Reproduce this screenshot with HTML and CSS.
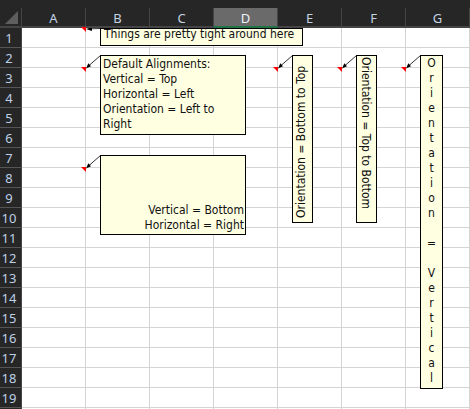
FILE: index.html
```html
<!DOCTYPE html>
<html>
<head>
<meta charset="utf-8">
<link rel="stylesheet" href="styles.css">
</head>
<body>
<div class="sheet">
  <div class="topbar"></div>
  <div class="row head">
    <div class="corner"><span class="tri"></span></div>
    <div class="ch">A</div><div class="ch">B</div><div class="ch">C</div><div class="ch sel">D</div><div class="ch">E</div><div class="ch">F</div><div class="ch">G</div>
  </div>
  <div class="row"><div class="rh">1</div><div class="cell note-mark"></div><div class="cell"></div><div class="cell"></div><div class="cell"></div><div class="cell"></div><div class="cell"></div><div class="cell"></div></div>
  <div class="row"><div class="rh">2</div><div class="cell"></div><div class="cell"></div><div class="cell"></div><div class="cell"></div><div class="cell"></div><div class="cell"></div><div class="cell"></div></div>
  <div class="row"><div class="rh">3</div><div class="cell note-mark"></div><div class="cell"></div><div class="cell"></div><div class="cell note-mark"></div><div class="cell note-mark"></div><div class="cell note-mark"></div><div class="cell"></div></div>
  <div class="row"><div class="rh">4</div><div class="cell"></div><div class="cell"></div><div class="cell"></div><div class="cell"></div><div class="cell"></div><div class="cell"></div><div class="cell"></div></div>
  <div class="row"><div class="rh">5</div><div class="cell"></div><div class="cell"></div><div class="cell"></div><div class="cell"></div><div class="cell"></div><div class="cell"></div><div class="cell"></div></div>
  <div class="row"><div class="rh">6</div><div class="cell"></div><div class="cell"></div><div class="cell"></div><div class="cell"></div><div class="cell"></div><div class="cell"></div><div class="cell"></div></div>
  <div class="row"><div class="rh">7</div><div class="cell"></div><div class="cell"></div><div class="cell"></div><div class="cell"></div><div class="cell"></div><div class="cell"></div><div class="cell"></div></div>
  <div class="row"><div class="rh">8</div><div class="cell note-mark"></div><div class="cell"></div><div class="cell"></div><div class="cell"></div><div class="cell"></div><div class="cell"></div><div class="cell"></div></div>
  <div class="row"><div class="rh">9</div><div class="cell"></div><div class="cell"></div><div class="cell"></div><div class="cell"></div><div class="cell"></div><div class="cell"></div><div class="cell"></div></div>
  <div class="row"><div class="rh">10</div><div class="cell"></div><div class="cell"></div><div class="cell"></div><div class="cell"></div><div class="cell"></div><div class="cell"></div><div class="cell"></div></div>
  <div class="row"><div class="rh">11</div><div class="cell"></div><div class="cell"></div><div class="cell"></div><div class="cell"></div><div class="cell"></div><div class="cell"></div><div class="cell"></div></div>
  <div class="row"><div class="rh">12</div><div class="cell"></div><div class="cell"></div><div class="cell"></div><div class="cell"></div><div class="cell"></div><div class="cell"></div><div class="cell"></div></div>
  <div class="row"><div class="rh">13</div><div class="cell"></div><div class="cell"></div><div class="cell"></div><div class="cell"></div><div class="cell"></div><div class="cell"></div><div class="cell"></div></div>
  <div class="row"><div class="rh">14</div><div class="cell"></div><div class="cell"></div><div class="cell"></div><div class="cell"></div><div class="cell"></div><div class="cell"></div><div class="cell"></div></div>
  <div class="row"><div class="rh">15</div><div class="cell"></div><div class="cell"></div><div class="cell"></div><div class="cell"></div><div class="cell"></div><div class="cell"></div><div class="cell"></div></div>
  <div class="row"><div class="rh">16</div><div class="cell"></div><div class="cell"></div><div class="cell"></div><div class="cell"></div><div class="cell"></div><div class="cell"></div><div class="cell"></div></div>
  <div class="row"><div class="rh">17</div><div class="cell"></div><div class="cell"></div><div class="cell"></div><div class="cell"></div><div class="cell"></div><div class="cell"></div><div class="cell"></div></div>
  <div class="row"><div class="rh">18</div><div class="cell"></div><div class="cell"></div><div class="cell"></div><div class="cell"></div><div class="cell"></div><div class="cell"></div><div class="cell"></div></div>
  <div class="row"><div class="rh">19</div><div class="cell"></div><div class="cell"></div><div class="cell"></div><div class="cell"></div><div class="cell"></div><div class="cell"></div><div class="cell"></div></div>
  <div class="row"><div class="rh"></div><div class="cell"></div><div class="cell"></div><div class="cell"></div><div class="cell"></div><div class="cell"></div><div class="cell"></div><div class="cell"></div></div>

  <div class="layer">
    <svg class="arrows" width="470" height="381" viewBox="0 28 470 381">
      <g stroke="#333" stroke-width="1" fill="none">
        <line x1="100.5" y1="28.5" x2="89" y2="28.8"/>
        <line x1="100.5" y1="55.5" x2="89" y2="65.5"/>
        <line x1="100.5" y1="155.5" x2="89" y2="165.5"/>
        <line x1="292.5" y1="55.5" x2="281" y2="65.5"/>
        <line x1="356.5" y1="55.5" x2="345" y2="65.5"/>
        <line x1="420.5" y1="55.5" x2="409" y2="65.5"/>
      </g>
      <g fill="#000">
        <polygon points="86,29 92,27 92,31"/>
        <polygon points="86,68.5 91,66.3 88.3,63.3"/>
        <polygon points="86,168.5 91,166.3 88.3,163.3"/>
        <polygon points="278,68.5 283,66.3 280.3,63.3"/>
        <polygon points="342,68.5 347,66.3 344.3,63.3"/>
        <polygon points="406,68.5 411,66.3 408.3,63.3"/>
      </g>
    </svg>
    <div class="note n1"><div class="txt">Things are pretty tight around here</div></div>
    <div class="note n2">Default Alignments:<br>Vertical = Top<br>Horizontal = Left<br>Orientation = Left to<br>Right</div>
    <div class="note n3"><div class="txt">Vertical = Bottom<br>Horizontal = Right</div></div>
    <div class="note rot up">Orientation = Bottom to Top</div>
    <div class="note rot down">Orientation = Top to Bottom</div>
    <div class="note stack"><span>O</span><span>r</span><span>i</span><span>e</span><span>n</span><span>t</span><span>a</span><span>t</span><span>i</span><span>o</span><span>n</span><span></span><span>=</span><span></span><span>V</span><span>e</span><span>r</span><span>t</span><span>i</span><span>c</span><span>a</span><span>l</span></div>
  </div>
</div>
</body>
</html>
```
FILE: styles.css
```css
* { box-sizing: border-box; }
html, body { margin: 0; padding: 0; }
body {
  width: 470px;
  height: 409px;
  overflow: hidden;
  background: #ffffff;
  font-family: "Noto Sans", "DejaVu Sans", sans-serif;
}
.sheet {
  position: relative;
  width: 470px;
  height: 409px;
  overflow: hidden;
}
.topbar {
  height: 8px;
  background: #262626;
}
.row {
  display: flex;
  height: 20px;
}
.head {
  background: #262626;
}
.corner {
  position: relative;
  width: 22px;
  height: 20px;
  border-right: 1px solid #454545;
  border-bottom: 2px solid #454545;
  background: #262626;
}
.tri {
  position: absolute;
  right: 3px;
  bottom: 2px;
  width: 0;
  height: 0;
  border-left: 13px solid transparent;
  border-bottom: 13px solid #5e5e5e;
}
.ch {
  width: 64px;
  height: 20px;
  border-right: 1px solid #454545;
  border-bottom: 2px solid #454545;
  background: #262626;
  color: #c4d3e3;
  font-size: 13px;
  display: flex;
  align-items: center;
  justify-content: center;
  padding-top: 1px;
}
.ch.sel {
  background: #6a6a6a;
  border-bottom-color: #217346;
  color: #eef3f8;
}
.rh {
  width: 22px;
  height: 20px;
  border-right: 1px solid #454545;
  border-bottom: 1px solid #555555;
  background: #262626;
  color: #bdd0e6;
  font-size: 13px;
  display: flex;
  align-items: center;
  justify-content: center;
  padding-right: 3px;
  padding-top: 1px;
}
.cell {
  position: relative;
  width: 64px;
  height: 20px;
  border-right: 1px solid #d4d4d4;
  border-bottom: 1px solid #d4d4d4;
  background: #ffffff;
}
.note-mark::after {
  content: "";
  position: absolute;
  top: -1px;
  right: -1px;
  width: 0;
  height: 0;
  border-top: 5px solid #ff0000;
  border-left: 5px solid transparent;
}
.layer {
  position: absolute;
  left: 0;
  top: 28px;
  width: 470px;
  height: 381px;
  overflow: hidden;
  pointer-events: none;
}
.arrows {
  position: absolute;
  left: 0;
  top: 0;
}
.note {
  position: absolute;
  background: #ffffe1;
  border: 1px solid #000000;
  color: #111111;
  font-family: "DejaVu Sans Condensed", "DejaVu Sans", sans-serif;
  font-size: 12px;
  line-height: 15px;
  white-space: nowrap;
}
.n1 {
  left: 100px;
  top: 0;
  width: 203px;
  height: 18px;
  padding-left: 3px;
}
.n1 .txt {
  margin-top: -2px;
}
.n2 {
  left: 100px;
  top: 27px;
  width: 146px;
  height: 80px;
  padding: 1px 2px;
}
.n3 {
  left: 100px;
  top: 127px;
  width: 146px;
  height: 80px;
  display: flex;
  flex-direction: column;
  justify-content: flex-end;
  align-items: flex-end;
  text-align: right;
  padding: 0 1px 1px 2px;
}
.rot {
  top: 27px;
  width: 21px;
  height: 168px;
  writing-mode: vertical-rl;
  padding-top: 1px;
}
.up {
  left: 292px;
  transform: rotate(180deg);
  padding-right: 1px;
  padding-top: 4px;
}
.down {
  left: 356px;
  padding-right: 3px;
}
.stack {
  left: 420px;
  top: 27px;
  width: 23px;
  height: 334px;
  display: flex;
  flex-direction: column;
  align-items: center;
}
.stack span {
  display: block;
  height: 15px;
}
```
